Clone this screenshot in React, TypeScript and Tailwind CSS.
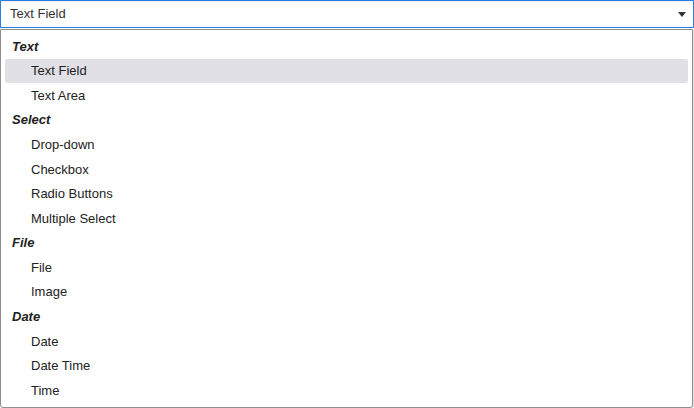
import React from 'react';

type Group = { label: string; options: string[] };

const groups: Group[] = [
  { label: 'Text', options: ['Text Field', 'Text Area'] },
  { label: 'Select', options: ['Drop-down', 'Checkbox', 'Radio Buttons', 'Multiple Select'] },
  { label: 'File', options: ['File', 'Image'] },
  { label: 'Date', options: ['Date', 'Date Time', 'Time'] },
];

const selected = 'Text Field';

export default function App() {
  return (
    <div className="w-[694px] h-[408px] bg-white text-[13px] text-[#222] font-['Liberation_Sans',Arial,sans-serif] overflow-hidden">
      {/* closed select, focused */}
      <div className="h-[28px] border border-[#2b7de1] bg-white shadow-[inset_0_1px_2px_rgba(0,0,0,0.08)] flex items-center justify-between pl-[9px] pr-[7px]">
        <span className="text-[#333]">{selected}</span>
        <svg width="8" height="5" viewBox="0 0 8 5" className="mt-[1px]">
          <path d="M0 0h8L4 5z" fill="#333" />
        </svg>
      </div>

      {/* popup list */}
      <div className="mt-[1px] w-[693px] h-[379px] border border-[#8e8e8e] rounded-b-[3px] bg-white px-[4px] pt-[4px] shadow-[1px_1px_1px_rgba(0,0,0,0.12)]">
        {groups.map((g) => (
          <div key={g.label}>
            <div className="h-[24.6px] flex items-center pl-[7px] font-bold italic text-[#222]">{g.label}</div>
            {g.options.map((o) => (
              <div
                key={o}
                className={`h-[24.6px] flex items-center pl-[26px] rounded-[2px] ${
                  o === selected ? 'bg-[#e1e0e6]' : ''
                } text-[#222]`}
              >
                {o}
              </div>
            ))}
          </div>
        ))}
      </div>
    </div>
  );
}
